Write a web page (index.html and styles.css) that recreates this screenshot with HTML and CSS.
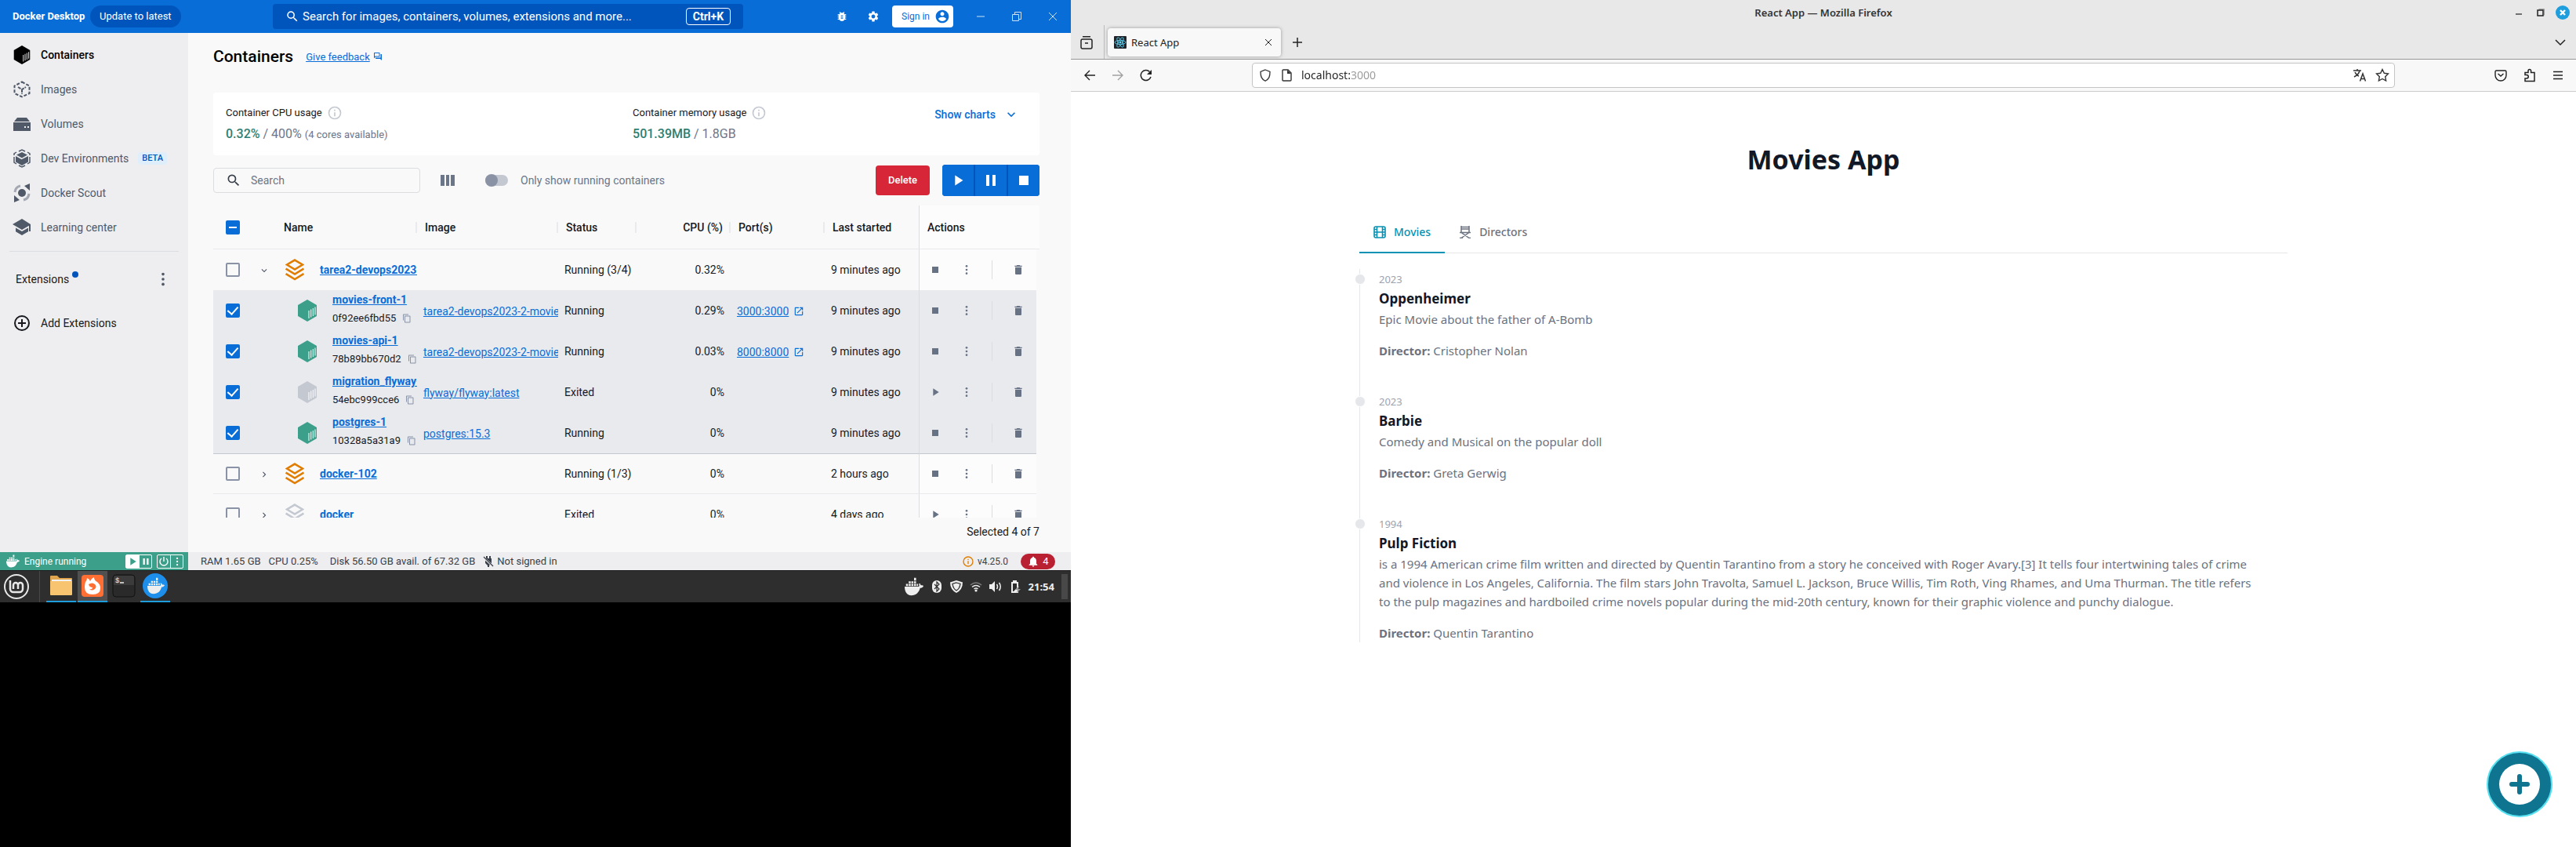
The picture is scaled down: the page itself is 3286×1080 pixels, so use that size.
FILE: index.html
```html
<!DOCTYPE html>
<html lang="en">
<head>
<meta charset="utf-8">
<title>Docker Desktop and React App</title>
<link rel="stylesheet" href="styles.css">
</head>
<body>
<svg class="sprite" aria-hidden="true">
  <symbol id="search" viewBox="0 0 24 24"><path d="M15.5 14h-.79l-.28-.27A6.471 6.471 0 0 0 16 9.5 6.5 6.5 0 1 0 9.5 16c1.61 0 3.09-.59 4.23-1.57l.27.28v.79l5 4.99L20.49 19l-4.99-5zm-6 0C7.01 14 5 11.99 5 9.5S7.01 5 9.5 5 14 7.01 14 9.5 11.99 14 9.5 14z"/></symbol>
  <symbol id="trash" viewBox="0 0 24 24"><path d="M6 19c0 1.1.9 2 2 2h8c1.1 0 2-.9 2-2V7H6v12zM19 4h-3.500l-1-1h-5l-1 1H5v2h14V4z"/></symbol>
  <symbol id="stop" viewBox="0 0 24 24"><path d="M6 6h12v12H6z"/></symbol>
  <symbol id="play" viewBox="0 0 24 24"><path d="M8 5v14l11-7z"/></symbol>
  <symbol id="pause" viewBox="0 0 24 24"><path d="M6 19h4V5H6v14zm8-14v14h4V5h-4z"/></symbol>
  <symbol id="dots" viewBox="0 0 24 24"><circle cx="12" cy="5" r="2"/><circle cx="12" cy="12" r="2"/><circle cx="12" cy="19" r="2"/></symbol>
  <symbol id="copy" viewBox="0 0 24 24"><path d="M16 1H4c-1.100 0-2 .9-2 2v14h2V3h12V1zm3 4H8c-1.100 0-2 .9-2 2v14c0 1.100.9 2 2 2h11c1.100 0 2-.9 2-2V7c0-1.100-.9-2-2-2zm0 16H8V7h11v14z"/></symbol>
  <symbol id="open" viewBox="0 0 24 24"><path d="M19 19H5V5h7V3H5c-1.110 0-2 .9-2 2v14c0 1.100.89 2 2 2h14c1.100 0 2-.9 2-2v-7h-2v7zM14 3v2h3.590l-9.830 9.830 1.410 1.410L19 6.410V10h2V3h-7z"/></symbol>
  <symbol id="info" viewBox="0 0 24 24"><path d="M11 7h2v2h-2zm0 4h2v6h-2zm1-9a10 10 0 1 0 0 20 10 10 0 0 0 0-20zm0 18a8 8 0 1 1 0-16 8 8 0 0 1 0 16z"/></symbol>
  <symbol id="down" viewBox="0 0 24 24"><path d="M7.410 8.590 12 13.170l4.590-4.580L18 10l-6 6-6-6z"/></symbol>
  <symbol id="right" viewBox="0 0 24 24"><path d="M8.590 16.590 13.170 12 8.590 7.410 10 6l6 6-6 6z"/></symbol>
  <symbol id="cube" viewBox="0 0 24 28"><path d="M12 0 24 7v14l-12 7L0 21V7z"/><path d="M14 14v10M16.700 12.500v10M19.400 11v10M22 9.500v10" stroke="#fff" stroke-width="1.200" opacity=".85"/></symbol>
  <symbol id="stack" viewBox="0 0 24 28"><g fill="none" stroke="currentColor" stroke-width="2.600"><path d="M12 1.600 22 7.500l-10 6-10-6z"/><path d="m.6 12.500 11.400 7 11.400-7M.6 19l11.400 7 11.400-7"/></g></symbol>
  <symbol id="whale" viewBox="0 0 28 28"><path d="M0 14h21c1-1 1-3 0-4 1-1 2-1 3 2 1 0 3 0 4 1-1 2-3 3-5 3-2 7-6 11-13 11C3 27 0 21 0 14z"/><path d="M2 10h3v3H2zM6 10h3v3H6zM10 10h3v3h-3zM14 10h3v3h-3zM18 10h2v3h-2zM6 6h3v3H6zM10 6h3v3h-3zM14 6h3v3h-3zM14 1h3v4h-3z"/></symbol>
</svg>

<div class="screens">
<section class="laptop">
  <div class="docker">
    <header class="topbar">
      <strong class="brand">Docker Desktop</strong>
      <button class="update">Update to latest</button>
      <div class="global-search">
        <svg class="i18"><use href="#search"/></svg>
        <input type="text" aria-label="Global search" placeholder="Search for images, containers, volumes, extensions and more...">
        <kbd>Ctrl+K</kbd>
      </div>
      <div class="top-tools">
        <button class="bare" aria-label="Troubleshoot"><svg class="i16" viewBox="0 0 24 24"><path d="M20 8h-2.810c-.45-.78-1.070-1.450-1.820-1.960L17 4.410 15.590 3l-2.170 2.170C12.960 5.060 12.490 5 12 5c-.49 0-.96.06-1.410.17L8.410 3 7 4.410l1.620 1.630C7.880 6.550 7.260 7.220 6.810 8H4v2h2.090c-.05.33-.09.66-.09 1v1H4v2h2v1c0 .34.04.67.09 1H4v2h2.810c1.040 1.790 2.970 3 5.190 3s4.150-1.210 5.190-3H20v-2h-2.090c.05-.33.09-.66.09-1v-1h2v-2h-2v-1c0-.34-.04-.67-.09-1H20V8zm-6 8h-4v-2h4v2zm0-4h-4v-2h4v2z"/></svg></button>
        <button class="bare" aria-label="Settings"><svg class="i16" viewBox="0 0 24 24"><path d="M19.140 12.940c.04-.3.06-.61.06-.94 0-.32-.02-.64-.07-.94l2.030-1.580c.18-.14.23-.41.12-.61l-1.920-3.320c-.12-.22-.37-.29-.59-.22l-2.390.96c-.5-.38-1.030-.7-1.620-.94l-.36-2.540c-.04-.24-.24-.41-.48-.41h-3.840c-.24 0-.43.17-.47.41l-.36 2.540c-.59.24-1.130.57-1.620.94l-2.390-.96c-.22-.08-.47 0-.59.22L2.740 8.870c-.12.21-.08.47.12.61l2.030 1.580c-.05.3-.09.63-.09.94s.02.64.07.94l-2.030 1.580c-.18.14-.23.41-.12.61l1.920 3.320c.12.22.37.29.59.22l2.390-.96c.5.38 1.030.7 1.620.94l.36 2.540c.05.24.24.41.48.41h3.840c.24 0 .44-.17.47-.41l.36-2.540c.59-.24 1.130-.56 1.620-.94l2.390.96c.22.08.47 0 .59-.22l1.920-3.320c.12-.22.07-.47-.12-.61l-2.010-1.580zM12 15.600c-1.980 0-3.600-1.620-3.600-3.600s1.620-3.600 3.600-3.600 3.600 1.620 3.600 3.600-1.620 3.600-3.600 3.600z"/></svg></button>
        <button class="signin">Sign in <svg class="i20" viewBox="0 0 24 24"><path d="M12 2C6.480 2 2 6.480 2 12s4.480 10 10 10 10-4.480 10-10S17.520 2 12 2zm0 3c1.660 0 3 1.340 3 3s-1.340 3-3 3-3-1.340-3-3 1.340-3 3-3zm0 14.200c-2.500 0-4.710-1.280-6-3.220.03-1.990 4-3.080 6-3.080 1.990 0 5.970 1.090 6 3.080-1.290 1.940-3.500 3.220-6 3.220z"/></svg></button>
      </div>
      <div class="win-tools">
        <button class="bare" aria-label="Minimize"><svg class="i14 line" viewBox="0 0 14 14"><path d="M2 7h10"/></svg></button>
        <button class="bare" aria-label="Restore"><svg class="i14 line" viewBox="0 0 14 14"><path d="M1.500 4.500h8v8h-8zM4.500 4V1.500h8v9H10"/></svg></button>
        <button class="bare" aria-label="Close"><svg class="i14 line" viewBox="0 0 14 14"><path d="m2 2 10 10M12 2 2 12"/></svg></button>
      </div>
    </header>

    <div class="docker-body">
      <aside class="sidebar">
        <nav>
          <a href="#containers" class="active"><svg class="i24"><use href="#cube"/></svg>Containers</a>
          <a href="#images"><svg class="i24" viewBox="0 0 24 24" fill="none" stroke="currentColor" stroke-width="2"><path d="M12 2.500 21.500 7.500v9.500L12 21.500 2.500 17V7.500z" stroke-dasharray="4 2"/><path d="m7 9 5 3 5-3M12 12v6" stroke-dasharray="4 1"/></svg>Images</a>
          <a href="#volumes"><svg class="i24" viewBox="0 0 24 24"><path d="M6 4h12l4 5H2zM1 10h22v11H1zm14 5v2h2v-2zm4 0v2h2v-2z" fill-rule="evenodd"/></svg>Volumes</a>
          <a href="#dev"><svg class="i24" viewBox="0 0 24 24"><path d="m12 4 7 3.500-7 4-7-4zM4 9l7.500 4.200L20 9v7.500L12 21l-8-4.500z"/><path d="m8 3 4-2 4 2M2 8V6l3-2M22 8V6l-3-2M2 10v7l3 2M22 10v7l-3 2M8 21l4 2 4-2" fill="none" stroke="currentColor" stroke-width="1.500"/></svg>Dev Environments<span class="beta">BETA</span></a>
          <a href="#scout"><svg class="i24" viewBox="0 0 24 24"><circle cx="12" cy="12" r="5"/><path d="M22 0v9l-7-6zM2 24v-9l7 6z"/><path d="M10 3a9 9 0 0 0-7 8M14 21a9 9 0 0 0 7-8" fill="none" stroke="#a3a8b2" stroke-width="3"/></svg>Docker Scout</a>
          <a href="#learn"><svg class="i24" viewBox="0 0 24 24"><path d="M12 1 0 8l12 7 9-5.200V17h2V8zM4 12.500v4.800L12 22l8-4.700v-4.800L12 17z"/></svg>Learning center</a>
        </nav>
        <hr>
        <div class="ext-head"><span class="ext-title">Extensions</span><button class="bare" aria-label="Extension options"><svg class="i22"><use href="#dots"/></svg></button></div>
        <a class="ext-add" href="#ext"><svg class="i24" viewBox="0 0 24 24"><path d="M13 7h-2v4H7v2h4v4h2v-4h4v-2h-4V7zm-1-5a10 10 0 1 0 0 20 10 10 0 0 0 0-20zm0 18a8 8 0 1 1 0-16 8 8 0 0 1 0 16z"/></svg>Add Extensions</a>
      </aside>

      <main class="content">
        <div class="page-head"><h1>Containers</h1><a href="#feedback">Give feedback</a><svg class="i12 blue" viewBox="0 0 24 24"><path d="M15 4v7H5.170L4 12.170V4h11m1-2H3c-.55 0-1 .45-1 1v14l4-4h10c.55 0 1-.45 1-1V3c0-.55-.45-1-1-1zm5 4h-2v9H6v2c0 .55.45 1 1 1h11l4 4V7c0-.55-.45-1-1-1z"/></svg></div>

        <div class="usage">
          <div class="metric"><div class="label">Container CPU usage<svg class="i20"><use href="#info"/></svg></div><div class="value"><b>0.32%</b> / 400% <small>(4 cores available)</small></div></div>
          <div class="metric"><div class="label">Container memory usage<svg class="i20"><use href="#info"/></svg></div><div class="value"><b>501.39MB</b> / 1.8GB</div></div>
          <button class="charts">Show charts<svg class="i20"><use href="#down"/></svg></button>
        </div>

        <div class="toolbar">
          <label class="filter"><svg class="i20"><use href="#search"/></svg><input type="text" aria-label="Search" placeholder="Search"></label>
          <button class="bare columns" aria-label="Columns"><svg width="18" height="14" viewBox="0 0 18 14"><path d="M0 0h5v14H0zM7 0h4v14H7zM13 0h5v14h-5z"/></svg></button>
          <label class="only"><input class="switch" type="checkbox">Only show running containers</label>
          <button class="delete">Delete</button>
          <div class="group">
            <button aria-label="Start"><svg class="i22"><use href="#play"/></svg></button>
            <button aria-label="Pause"><svg class="i24"><use href="#pause"/></svg></button>
            <button aria-label="Stop"><svg class="i24"><use href="#stop"/></svg></button>
          </div>
        </div>

        <div class="table-scroll">
          <table>
            <colgroup><col class="c-check"><col class="c-exp"><col class="c-name"><col><col class="c-status"><col class="c-num"><col class="c-num"><col class="c-num"><col class="c-act"><col class="c-end"></colgroup>
            <thead><tr>
              <th><input type="checkbox" class="some" aria-label="Select all"></th><th></th>
              <th class="sep">Name</th><th class="sep">Image</th><th class="sep">Status</th><th class="sep num">CPU (%)</th><th class="sep">Port(s)</th><th>Last started</th><th class="act" colspan="2">Actions</th>
            </tr></thead>
            <tbody>
              <tr>
                <td><input type="checkbox" aria-label="Select tarea2-devops2023"></td><td class="exp"><svg class="i14"><use href="#down"/></svg></td>
                <td class="name"><div><svg class="stack on"><use href="#stack"/></svg><a href="#c">tarea2-devops2023-2</a></div></td><td></td><td>Running (3/4)</td><td class="num">0.32%</td><td></td><td>9 minutes ago</td>
                <td class="act"><div><button aria-label="Stop"><svg class="i16"><use href="#stop"/></svg></button><button aria-label="More"><svg class="i16"><use href="#dots"/></svg></button><button class="del" aria-label="Delete"><svg class="i16"><use href="#trash"/></svg></button></div></td>
              </tr>
              <tr class="sel">
                <td><input type="checkbox" checked aria-label="Select movies-front-1"></td><td></td>
                <td class="name sub"><div><svg class="cube on"><use href="#cube"/></svg><p><a href="#c">movies-front-1</a><span>0f92ee6fbd55<svg class="i12"><use href="#copy"/></svg></span></p></div></td><td><a href="#c">tarea2-devops2023-2-movies</a></td><td>Running</td><td class="num">0.29%</td><td><a href="#c">3000:3000</a><svg class="i14 ext"><use href="#open"/></svg></td><td>9 minutes ago</td>
                <td class="act"><div><button aria-label="Stop"><svg class="i16"><use href="#stop"/></svg></button><button aria-label="More"><svg class="i16"><use href="#dots"/></svg></button><button class="del" aria-label="Delete"><svg class="i16"><use href="#trash"/></svg></button></div></td>
              </tr>
              <tr class="sel">
                <td><input type="checkbox" checked aria-label="Select movies-api-1"></td><td></td>
                <td class="name sub"><div><svg class="cube on"><use href="#cube"/></svg><p><a href="#c">movies-api-1</a><span>78b89bb670d2<svg class="i12"><use href="#copy"/></svg></span></p></div></td><td><a href="#c">tarea2-devops2023-2-movies</a></td><td>Running</td><td class="num">0.03%</td><td><a href="#c">8000:8000</a><svg class="i14 ext"><use href="#open"/></svg></td><td>9 minutes ago</td>
                <td class="act"><div><button aria-label="Stop"><svg class="i16"><use href="#stop"/></svg></button><button aria-label="More"><svg class="i16"><use href="#dots"/></svg></button><button class="del" aria-label="Delete"><svg class="i16"><use href="#trash"/></svg></button></div></td>
              </tr>
              <tr class="sel">
                <td><input type="checkbox" checked aria-label="Select migration_flyway"></td><td></td>
                <td class="name sub"><div><svg class="cube"><use href="#cube"/></svg><p><a href="#c">migration_flyway-1</a><span>54ebc999cce6<svg class="i12"><use href="#copy"/></svg></span></p></div></td><td><a href="#c">flyway/flyway:latest</a></td><td>Exited</td><td class="num">0%</td><td></td><td>9 minutes ago</td>
                <td class="act"><div><button aria-label="Start"><svg class="i16"><use href="#play"/></svg></button><button aria-label="More"><svg class="i16"><use href="#dots"/></svg></button><button class="del" aria-label="Delete"><svg class="i16"><use href="#trash"/></svg></button></div></td>
              </tr>
              <tr class="sel">
                <td><input type="checkbox" checked aria-label="Select postgres-1"></td><td></td>
                <td class="name sub"><div><svg class="cube on"><use href="#cube"/></svg><p><a href="#c">postgres-1</a><span>10328a5a31a9<svg class="i12"><use href="#copy"/></svg></span></p></div></td><td><a href="#c">postgres:15.3</a></td><td>Running</td><td class="num">0%</td><td></td><td>9 minutes ago</td>
                <td class="act"><div><button aria-label="Stop"><svg class="i16"><use href="#stop"/></svg></button><button aria-label="More"><svg class="i16"><use href="#dots"/></svg></button><button class="del" aria-label="Delete"><svg class="i16"><use href="#trash"/></svg></button></div></td>
              </tr>
              <tr class="after">
                <td><input type="checkbox" aria-label="Select docker-102"></td><td class="exp"><svg class="i14"><use href="#right"/></svg></td>
                <td class="name"><div><svg class="stack on"><use href="#stack"/></svg><a href="#c">docker-102</a></div></td><td></td><td>Running (1/3)</td><td class="num">0%</td><td></td><td>2 hours ago</td>
                <td class="act"><div><button aria-label="Stop"><svg class="i16"><use href="#stop"/></svg></button><button aria-label="More"><svg class="i16"><use href="#dots"/></svg></button><button class="del" aria-label="Delete"><svg class="i16"><use href="#trash"/></svg></button></div></td>
              </tr>
              <tr>
                <td><input type="checkbox" aria-label="Select docker"></td><td class="exp"><svg class="i14"><use href="#right"/></svg></td>
                <td class="name"><div><svg class="stack"><use href="#stack"/></svg><a href="#c">docker</a></div></td><td></td><td>Exited</td><td class="num">0%</td><td></td><td>4 days ago</td>
                <td class="act"><div><button aria-label="Start"><svg class="i16"><use href="#play"/></svg></button><button aria-label="More"><svg class="i16"><use href="#dots"/></svg></button><button class="del" aria-label="Delete"><svg class="i16"><use href="#trash"/></svg></button></div></td>
              </tr>
            </tbody>
          </table>
        </div>
        <p class="selected">Selected 4 of 7</p>
      </main>
    </div>

    <footer class="status">
      <div class="engine">
        <svg class="i17"><use href="#whale"/></svg><span>Engine running</span>
        <div class="pair"><button class="lit" aria-label="Resume"><svg class="i16"><use href="#play"/></svg></button><button aria-label="Pause"><svg class="i14"><use href="#pause"/></svg></button></div>
        <div class="pair"><button aria-label="Power"><svg class="i14" viewBox="0 0 14 14" fill="none" stroke="currentColor" stroke-width="1.400"><path d="M7 1v6M4 3a5 5 0 1 0 6 0"/></svg></button><button aria-label="More"><svg class="i14"><use href="#dots"/></svg></button></div>
      </div>
      <div class="stats">
        <span class="ram">RAM 1.65 GB</span><span class="cpu">CPU 0.25%</span><span class="disk">Disk 56.50 GB avail. of 67.32 GB</span>
        <svg class="i14" viewBox="0 0 14 14"><path d="M4 0h2v3h2V0h2v3h1v6l-3 3v2H6v-2L3 9V3h1z"/><path d="m1 2 12 11" stroke="#eeeef0" stroke-width="2.500"/><path d="m1 1 12 12" stroke="currentColor" stroke-width="1.200"/></svg><span>Not signed in</span>
        <span class="version"><svg class="i16"><use href="#info"/></svg>v4.25.0</span>
        <button class="bell"><svg class="i16" viewBox="0 0 24 24"><path d="M12 22c1.100 0 2-.9 2-2h-4c0 1.100.89 2 2 2zm6-6v-5c0-3.070-1.640-5.640-4.500-6.320V4c0-.83-.67-1.500-1.500-1.500s-1.500.67-1.500 1.500v.68C7.630 5.360 6 7.920 6 11v5l-2 2v1h16v-1l-2-2z"/></svg>4</button>
      </div>
    </footer>
  </div>

  <div class="taskbar">
    <button class="menu" aria-label="Menu"><svg class="i32" viewBox="0 0 32 32" fill="none" stroke="#e8e8e8" stroke-width="2"><circle cx="16" cy="16" r="15"/><path d="M8 8v11a4 4 0 0 0 4 4h8a4 4 0 0 0 4-4v-5a3 3 0 0 0-6 0v5-5a3 3 0 0 0-6 0v5" stroke-width="2.500"/></svg></button>
    <button class="app run" aria-label="Files"><svg class="i32" viewBox="0 0 32 32"><path d="M2 4q0-1 1-1h8l3 3h15q1 0 1 1v6H2z" fill="#e0a54f"/><path d="M4 8h25v4H4z" fill="#f2f2f2"/><path d="M2 10h28v17q0 1-1 1H3q-1 0-1-1z" fill="#f8c470"/></svg></button>
    <button class="app run open" aria-label="Firefox"><svg class="i32" viewBox="0 0 32 32"><rect x="2" y="2" width="28" height="28" rx="4" fill="#ff6f33"/><path d="M7 11q2-2 2-5 3 1 4 4 2-4 5-5 0 4 4 6 4 3 4 8 0 8-10 8T6 18q0-4 1-7z" fill="#fff"/><path d="M11 14q5-3 8 0 3 3 0 6-4 3-7 0 4 1 4-2-4 0-5-4z" fill="#ff6f33"/></svg></button>
    <button class="app" aria-label="Terminal"><svg class="i32" viewBox="0 0 32 32"><rect x="2" y="2" width="28" height="28" rx="4" fill="#2a2a2a" stroke="#111"/><path d="M3 5q0-2 2-2h22q2 0 2 2v10H3z" fill="#3b3b3b"/><path d="M11 12h5" stroke="#eee" stroke-width="1.500"/><text x="5" y="12" font-family="Liberation Mono,monospace" font-size="9" fill="#eee">$</text></svg></button>
    <button class="app run" aria-label="Docker Desktop"><svg class="i32" viewBox="0 0 32 32"><circle cx="16" cy="16" r="16" fill="#1d8feb"/><svg x="5" y="5" width="24" height="22" fill="#fff"><use href="#whale"/></svg></svg></button>
    <div class="tray">
      <svg class="i24"><use href="#whale"/></svg>
      <svg class="i16" viewBox="0 0 16 16"><rect x="2" width="12" height="16" rx="6"/><path d="m5 5 6 6-3 3V2l3 3-6 6" fill="none" stroke="#2e2e2e" stroke-width="1.200"/></svg>
      <svg class="i16" viewBox="0 0 16 16"><path d="m8 0 8 2.500Q16 12 8 16 0 12 0 2.500z"/><path d="m8 3 5 1.500Q12 11 8 13 4 11 3 4.500z" fill="none" stroke="#2e2e2e" stroke-width="1.300"/></svg>
      <svg class="i16" viewBox="0 0 16 16" fill="none" stroke="currentColor" stroke-width="1.600"><path d="M1 6q7-6 14 0" opacity=".4"/><path d="M3 8.500q5-4 10 0M5.500 11q2.500-2 5 0"/><circle cx="8" cy="13" r=".8"/></svg>
      <svg class="i16" viewBox="0 0 16 16"><path d="M0 5h3l4-4v14l-4-4H0z"/><path d="M9.500 5q2 3 0 6M12.500 3q3.500 5 0 10" fill="none" stroke="currentColor" stroke-width="1.500"/></svg>
      <svg class="i16" viewBox="0 0 16 16"><path d="M3 2h2V0h5v2h2v14H3z"/><path d="M5 4h5v6l-4 4H5z" fill="#2e2e2e"/><path d="m13 7-5 5h3l-1 4 5-5h-3z" fill="#999"/></svg>
      <time>21:54</time><i class="peek"></i>
    </div>
  </div>
</section>

<section class="firefox">
  <div class="titlebar"><span>React App — Mozilla Firefox</span>
    <div class="ff-win">
      <button aria-label="Minimize"><svg class="i18" viewBox="0 0 18 18"><path d="M5 11h8" stroke="#222" stroke-width="1.200"/></svg></button>
      <button aria-label="Restore"><svg class="i18" viewBox="0 0 18 18" fill="none"><path d="M6.500 4.500h7v8" stroke="#999"/><path d="M5 6h7v7H5z" stroke="#222" stroke-width="1.500"/></svg></button>
      <button aria-label="Close"><svg class="i18" viewBox="0 0 18 18"><circle cx="9" cy="9" r="9" fill="#1f9ede"/><path d="m6 6 6 6M12 6l-6 6" stroke="#fff" stroke-width="2.400"/></svg></button>
    </div>
  </div>
  <div class="tabstrip">
    <button class="ffview" aria-label="Firefox View"><svg class="i18" viewBox="0 0 18 18" fill="none" stroke="currentColor" stroke-width="1.500"><rect x="2" y="5" width="14" height="12" rx="2"/><path d="M4 1.800h10M7 10h4"/></svg></button>
    <div class="tab"><svg class="i16" viewBox="0 0 16 16"><rect width="16" height="16" rx="1" fill="#20232a"/><g fill="none" stroke="#61dafb" stroke-width=".8"><ellipse cx="8" cy="8" rx="7" ry="2.600"/><ellipse cx="8" cy="8" rx="7" ry="2.600" transform="rotate(60 8 8)"/><ellipse cx="8" cy="8" rx="7" ry="2.600" transform="rotate(120 8 8)"/></g><circle cx="8" cy="8" r="1.400" fill="#61dafb"/></svg><span>React App</span><button aria-label="Close tab"><svg class="i12" viewBox="0 0 12 12"><path d="m2 2 8 8M10 2l-8 8" stroke="currentColor"/></svg></button></div>
    <button class="newtab" aria-label="New tab"><svg class="i14" viewBox="0 0 14 14"><path d="M7 1v12M1 7h12" stroke="currentColor" stroke-width="1.500"/></svg></button>
    <button class="alltabs" aria-label="List tabs"><svg class="i14" viewBox="0 0 14 14"><path d="m1 4 6 6 6-6" fill="none" stroke="currentColor" stroke-width="1.500"/></svg></button>
  </div>
  <div class="navbar">
    <div class="nav-left">
      <button aria-label="Back"><svg class="i16" viewBox="0 0 16 16"><path d="M15 8H2m6-6L2 8l6 6" fill="none" stroke="currentColor" stroke-width="1.400"/></svg></button>
      <button class="dim" aria-label="Forward"><svg class="i16" viewBox="0 0 16 16"><path d="M1 8h13M8 2l6 6-6 6" fill="none" stroke="currentColor" stroke-width="1.400"/></svg></button>
      <button aria-label="Reload"><svg class="i16" viewBox="0 0 16 16"><path d="M14 10a6.500 6.500 0 1 1-1.500-6.500" fill="none" stroke="currentColor" stroke-width="1.500"/><path d="M15 1v6H9z"/></svg></button>
    </div>
    <div class="url">
      <svg class="i16" viewBox="0 0 16 16"><path d="m8 1 6 2.500c0 6-1 9-6 11.800C3 12.500 2 9.500 2 3.500z" fill="none" stroke="currentColor" stroke-width="1.300"/></svg>
      <svg class="i16" viewBox="0 0 16 16"><path d="M3 2q0-1 1-1h6l4 4v9q0 1-1 1H4q-1 0-1-1z" fill="none" stroke="currentColor" stroke-width="1.400"/><path d="M9 1v5h5z"/></svg>
      <input type="text" aria-label="Address" value="localhost:3000">
      <svg class="i18" viewBox="0 0 18 18" fill="none" stroke="currentColor" stroke-width="1.500"><path d="M1 3h10M6 1v2M9 3q-1 5-7 8M3 5q2 4 5 5M9.500 16.500 13 7l3.500 9.500M11 13.500h4.500"/></svg>
      <svg class="i18" viewBox="0 0 18 18"><path d="m9 1.500 2.300 4.800 5.200.7-3.800 3.700.9 5.300L9 13.500 4.400 16l.9-5.300L1.500 7l5.200-.7z" fill="none" stroke="currentColor" stroke-width="1.400"/></svg>
    </div>
    <div class="nav-right">
      <button aria-label="Pocket"><svg class="i16" viewBox="0 0 16 16" fill="none" stroke="currentColor" stroke-width="1.400"><path d="M2.500 2h11Q15 2 15 3.500V8a7 7 0 0 1-14 0V3.500Q1 2 2.500 2z"/><path d="m4.500 6 3.500 3 3.500-3"/></svg></button>
      <button aria-label="Extensions"><svg class="i18" viewBox="0 0 18 18"><path d="M3 8V5.500h4V3.300a1.800 1.800 0 0 1 3.600 0v2.200H15V16.500H3V13h2a1.500 1.500 0 0 0 0-4.500H3z" fill="none" stroke="currentColor" stroke-width="1.500"/></svg></button>
      <button aria-label="Menu"><svg class="i14" viewBox="0 0 14 14"><path d="M1 2.500h12M1 7h12M1 11.500h12" stroke="currentColor" stroke-width="1.400"/></svg></button>
    </div>
  </div>

  <div class="page">
    <div class="wrap">
      <h1>Movies App</h1>
      <div class="tabs" role="tablist">
        <button role="tab" aria-selected="true" class="on"><svg class="i16" viewBox="0 0 16 16" fill="none" stroke="currentColor" stroke-width="1.600"><rect x="1" y="1" width="14" height="14" rx="2"/><path d="M4.500 1v14M11.500 1v14M4.500 8h7M1 4.500h3.500M1 8h3.500M1 11.500h3.500M11.500 4.500H15M11.500 8H15M11.500 11.500H15"/></svg>Movies</button>
        <button role="tab" aria-selected="false"><svg class="i16" viewBox="0 0 16 16" fill="none" stroke="currentColor" stroke-width="1.500"><path d="M3 0v9M13 0v9M3 1.500h10M3 4h10M1 8.500h14M3 15.500l10-7M13 15.500l-10-7M1 15.500h4M11 15.500h4"/></svg>Directors</button>
      </div>
      <ol class="timeline">
        <li><time>2023</time><h3>Oppenheimer</h3><p>Epic Movie about the father of A-Bomb</p><p class="by"><b>Director:</b> Cristopher Nolan</p></li>
        <li><time>2023</time><h3>Barbie</h3><p>Comedy and Musical on the popular doll</p><p class="by"><b>Director:</b> Greta Gerwig</p></li>
        <li><time>1994</time><h3>Pulp Fiction</h3><p>is a 1994 American crime film written and directed by Quentin Tarantino from a story he conceived with Roger Avary.[3] It tells four intertwining tales of crime and violence in Los Angeles, California. The film stars John Travolta, Samuel L. Jackson, Bruce Willis, Tim Roth, Ving Rhames, and Uma Thurman. The title refers to the pulp magazines and hardboiled crime novels popular during the mid-20th century, known for their graphic violence and punchy dialogue.</p><p class="by"><b>Director:</b> Quentin Tarantino</p></li>
      </ol>
    </div>
    <button class="fab" aria-label="Add movie"><svg width="52" height="52" viewBox="0 0 52 52"><circle cx="26" cy="26" r="26" fill="#fff"/><path d="M26 16v20M16 26h20" stroke="#0e7490" stroke-width="6" stroke-linecap="round"/></svg></button>
  </div>
</section>
</div>
</body>
</html>
```
FILE: styles.css
```css
* { box-sizing: border-box; }
body { margin: 0; background: #000; font-family: Roboto, sans-serif; font-size: 14px; line-height: 20px; color: #17191e; }
h1, h3, p, ol { margin: 0; padding: 0; }
button, input { font: inherit; color: inherit; margin: 0; padding: 0; }
button { border: 0; background: none; display: flex; align-items: center; justify-content: center; }
a { color: #086dd7; }
svg { display: block; flex: none; fill: currentColor; }
svg[fill="none"] { fill: none; }
.sprite { position: absolute; width: 0; height: 0; }
.i12 { width: 12px; height: 12px; }
.i14 { width: 14px; height: 14px; }
.i16 { width: 16px; height: 16px; }
.i17 { width: 17px; height: 17px; }
.i18 { width: 18px; height: 18px; }
.i20 { width: 20px; height: 20px; }
.i22 { width: 22px; height: 22px; }
.i24 { width: 24px; height: 24px; }
.i32 { width: 32px; height: 32px; }
.blue { color: #086dd7; }

.screens { display: grid; grid-template-columns: 1366fr 1920fr; min-height: 100vh; }
.laptop { min-width: 0; }

/* Docker top bar */
.topbar { display: flex; align-items: center; height: 42px; padding: 0 16px; background: #086dd7; color: #fff; }
.brand { font-size: 13px; font-weight: 700; width: 99px; white-space: nowrap; }
.update { height: 28px; padding: 0 12px; border-radius: 14px; background: #0055bc; font-size: 13px; white-space: nowrap; }
.global-search { display: flex; align-items: center; width: 600px; height: 32px; margin-left: auto; padding: 0 16px; border-radius: 4px; background: #0055bc; }
.global-search input { flex: 1; min-width: 0; margin-left: 4px; border: 0; background: none; font-size: 15px; }
.global-search input::placeholder { color: #fff; opacity: 1; }
kbd { height: 22px; padding: 0 8px; border: 1px solid #fff; border-radius: 4px; font: 700 14px/20px Roboto, sans-serif; }
.top-tools { display: flex; align-items: center; gap: 24px; margin-left: 118px; }
.signin { gap: 6px; height: 28px; margin-left: -8px; padding: 0 4px 0 12px; border-radius: 4px; background: #fff; color: #086dd7; font-size: 12px; white-space: nowrap; }
.win-tools { display: flex; gap: 32px; margin-left: 28px; }
.line { fill: none; stroke: #fff; opacity: .8; }

/* Sidebar */
.docker-body { display: flex; }
.sidebar { width: 240px; flex: none; padding: 6px 0 0; background: #eeeef0; color: #505968; }
.sidebar a { display: flex; align-items: center; gap: 12px; height: 44px; padding-left: 16px; color: inherit; text-decoration: none; }
.sidebar a.active { color: #000; font-weight: 500; }
.sidebar hr { height: 1px; margin: 8px 12px 13px; border: 0; background: #dcdde1; }
.beta { padding: 0 5px; border-radius: 4px; background: #dfeefb; color: #0055bc; font-size: 11px; font-weight: 500; line-height: 16px; }
.ext-head { display: flex; align-items: center; justify-content: space-between; height: 44px; padding: 0 21px 0 20px; }
.ext-title { display: flex; color: #17191e; }
.ext-title::after { content: ""; width: 8px; height: 8px; margin-left: 4px; border-radius: 50%; background: #0055bc; }
.sidebar .ext-add { margin-top: 12px; color: #17191e; }

/* Containers view */
.content { flex: 1; min-width: 0; padding: 0 40px 16px 32px; background: #f9f9fa; }
.page-head { display: flex; align-items: center; height: 60px; }
.page-head h1 { font-size: 21px; font-weight: 500; color: #000; margin-right: 16px; }
.page-head a { font-size: 13px; margin: 2px 4px 0 0; }
.usage { display: grid; grid-template-columns: 519fr 385fr auto; align-items: start; min-height: 80px; margin-top: 16px; padding: 16px 26px 12px 16px; border-radius: 4px; background: #fff; }
.label { display: flex; align-items: center; gap: 6px; font-size: 13px; line-height: 20px; }
.label svg { color: #c4c8d1; }
.value { margin-top: 4px; font-size: 16px; line-height: 26px; color: #6c7689; }
.value b { font-weight: 500; color: #2e7f74; }
.value small { font-size: 13px; }
.charts { gap: 10px; height: 24px; color: #086dd7; font-weight: 500; }
.toolbar { display: flex; align-items: center; height: 40px; margin: 12px 0; }
.filter { display: flex; align-items: center; width: 264px; height: 32px; padding: 0 15px; border: 1px solid #dcdde1; border-radius: 4px; color: #393f49; }
.filter input { flex: 1; min-width: 0; margin-left: 12px; border: 0; background: none; }
.filter input::placeholder { color: #6c7689; opacity: 1; }
.columns { margin: 0 39px 0 26px; color: #6c7689; }
.only { display: flex; align-items: center; gap: 16px; color: #6c7689; white-space: nowrap; }
.switch { appearance: none; display: flex; align-items: center; width: 29px; height: 14px; border-radius: 7px; background: #c4c8d1; }
.switch::before { content: ""; width: 16px; height: 16px; flex: none; border-radius: 50%; background: #8993a5; }
.delete { height: 38px; margin-left: auto; padding: 0 16px; border-radius: 4px; background: #d72638; color: #fff; font-size: 13px; font-weight: 500; }
.group { display: flex; gap: 2px; margin-left: 16px; border-radius: 4px; overflow: hidden; background: #0055bc; color: #fff; }
.group button { width: 40px; height: 40px; background: #086dd7; }

/* Table */
.table-scroll { height: 398px; overflow: hidden; }
table { width: 100%; table-layout: fixed; border-spacing: 0; border-collapse: separate; }
.c-check, .c-exp { width: 40px; }
.c-name { width: 180px; }
.c-status { width: 100px; }
.c-num { width: 120px; }
.c-act { width: 150px; }
.c-end { width: 4px; }
th { height: 56px; padding: 0 10px; border-bottom: 1px solid #e9eaee; font-weight: 500; text-align: left; }
th.sep { background: linear-gradient(#e9eaee, #e9eaee) right center / 2px 14px no-repeat; }
th:first-child, td:first-child { padding: 0 0 0 16px; }
td { height: 52px; padding: 0 8px; overflow: hidden; white-space: nowrap; }
td:nth-child(4) { text-overflow: clip; }
.num { text-align: right; }
th.act, td.act { border-left: 1px solid #dcdde1; background: #fcfcfd; }
.sel td, .sel td.act { background: #e9eaee; }
.after td { border-top: 1px solid #c4c8d1; border-bottom: 1px solid #e9eaee; }
td > a, td > svg { display: inline-block; vertical-align: middle; }
input[type="checkbox"]:not(.switch) { appearance: none; display: flex; align-items: center; justify-content: center; width: 18px; height: 18px; border: 2px solid #8993a5; border-radius: 2px; }
input[type="checkbox"]:checked:not(.switch), input[type="checkbox"].some:not(.switch) { border-color: #086dd7; background: #086dd7; }
input[type="checkbox"]:checked::before { content: ""; width: 6px; height: 11px; margin-bottom: 3px; border: solid #fff; border-width: 0 2px 2px 0; transform: rotate(42deg); }
input[type="checkbox"].some::before { content: ""; width: 10px; height: 2px; background: #fff; }
.exp svg { margin-left: 10px; color: #505968; }
td.name { padding: 0 0 0 12px; }
.name div { display: flex; align-items: center; gap: 20px; overflow: hidden; }
.name a { font-weight: 700; }
td.sub { padding-left: 28px; vertical-align: top; }
.sub p { line-height: 24px; margin-bottom: 4px; }
.sub p a { display: block; }
.sub span { display: flex; align-items: center; gap: 8px; font-size: 13px; }
.sub span svg { color: #8993a5; }
.stack, .cube { width: 24px; height: 28px; color: #c4c8d1; }
.stack.on { color: #e07c00; }
.cube.on { color: #3b9f8a; }
.ext { margin-left: 6px; color: #086dd7; }
td.act { padding: 0; }
.act div { display: flex; align-items: center; color: #677285; }
.act button { width: 40px; height: 24px; }
.act button.del { justify-content: flex-end; width: 52px; margin-left: 12px; padding-right: 10px; border-left: 1px solid #dcdde1; }
.selected { padding-top: 8px; text-align: right; }

/* Status bar */
.status { display: flex; height: 23px; background: #eeeef0; color: #393f49; }
.engine { display: flex; align-items: center; width: 240px; flex: none; padding: 0 6px 0 8px; gap: 6px; background: #3b9f8a; color: #fff; font-size: 12px; }
.engine span { flex: 1; }
.pair { display: flex; border: 1px solid #fff; border-radius: 2px; }
.pair button { width: 16px; height: 16px; }
.pair button + button { border-left: 1px solid #fff; }
.pair .lit { background: #fff; color: #3b9f8a; }
.stats { display: flex; align-items: center; flex: 1; padding: 0 20px 0 16px; font-size: 13px; white-space: nowrap; }
.cpu { margin: 0 15px 0 10px; }
.disk { margin-right: 10px; }
.stats svg + span { margin-left: 4px; }
.stats .version { display: flex; align-items: center; gap: 4px; margin-left: auto; font-size: 12px; }
.version svg { color: #e07c00; }
.bell { gap: 4px; width: 44px; height: 20px; margin-left: 16px; border-radius: 10px; background: #b92032; color: #fff; }

/* Desktop panel */
.taskbar { display: flex; align-items: center; height: 41px; padding-left: 5px; background: #2e2e2e; border-top: 1px solid #1c1c1c; color: #eee; }
.menu { width: 46px; height: 40px; padding-right: 14px; margin-right: 8px; border-right: 1px solid #484848; }
.app { width: 38px; height: 40px; margin-right: 2px; border-bottom: 2px solid transparent; }
.run { border-color: #1f9ede; }
.open { background: #505050; }
.tray { display: flex; align-items: center; gap: 9px; margin-left: auto; padding-right: 4px; }
.tray time { font: 700 13px "Noto Sans", sans-serif; }
.peek { width: 8px; height: 32px; background: #484848; }

/* Firefox chrome */
.firefox { display: flex; flex-direction: column; min-width: 0; background: #fff; font-family: "Noto Sans", "Open Sans", sans-serif; }
.titlebar { display: grid; grid-template-columns: 1fr auto 1fr; align-items: center; height: 32px; padding: 0 8px; background: #e8e8e8; color: #333; font-size: 13px; font-weight: 600; }
.titlebar span { grid-column: 2; }
.ff-win { display: flex; justify-content: flex-end; gap: 10px; }
.tabstrip { display: flex; align-items: center; height: 44px; background: #e8e8e8; border-bottom: 1px solid #999; color: #222; }
.ffview { width: 43px; height: 43px; padding-right: 3px; border-right: 1px solid #bbb; }
.tab { display: flex; align-items: center; gap: 6px; width: 221px; height: 36px; margin-left: 4px; padding: 0 10px 0 8px; border-radius: 4px; background: #f8f8f8; box-shadow: 0 0 4px #999; }
.tab span { flex: 1; font-size: 13px; }
.newtab { margin-left: 14px; }
.alltabs { margin: 0 13px 0 auto; }
.navbar { display: flex; align-items: center; height: 41px; padding: 0 16px; background: #f8f8f8; border-bottom: 1px solid #ccc; color: #222; }
.nav-left { display: flex; gap: 20px; width: 215px; }
.dim { opacity: .4; }
.url { display: flex; align-items: center; gap: 11px; flex: 1; min-width: 0; height: 32px; padding: 0 6px 0 8px; border: 1px solid #c4c4c4; border-radius: 4px; background: #fff; color: #333; }
.url input { flex: 1; min-width: 0; border: 0; font-size: 14px; color: transparent; background: linear-gradient(90deg, #222 62px, #999 62px); background-clip: text; }
.nav-right { display: flex; gap: 20px; width: 215px; justify-content: flex-end; }

/* Movies page */
.page { position: relative; flex: 1; color: #6b7280; font-size: 15px; line-height: 24px; }
.wrap { max-width: 1184px; margin: 0 auto; }
.page h1 { padding-top: 66px; text-align: center; color: #111827; font-size: 34px; font-weight: 700; line-height: 40px; }
.tabs { display: flex; margin-top: 46px; border-bottom: 1px solid #e5e7eb; }
.tabs button { gap: 10px; height: 54px; margin-bottom: -1px; padding: 2px 18px 0; border-bottom: 2px solid transparent; color: #6b7280; font-size: 14px; font-weight: 500; }
.tabs .on { border-color: #0891b2; color: #0891b2; }
.timeline { margin-top: 20px; border-left: 1px solid #e5e7eb; list-style: none; }
.timeline li { position: relative; padding: 6px 38px 40px 24px; }
.timeline li:last-child { padding-bottom: 0; }
.timeline li::before { content: ""; position: absolute; left: -7px; top: 6px; width: 12px; height: 12px; border: 1px solid #fff; border-radius: 50%; background: #e5e7eb; }
.timeline time { display: block; font-size: 13px; line-height: 14px; color: #9ca3af; }
.timeline h3 { margin-top: 4px; color: #111827; font-size: 17px; font-weight: 700; line-height: 28px; }
.by { margin-top: 16px; }
.fab { position: absolute; right: 30px; bottom: 38px; width: 84px; height: 84px; border: 2px solid #56e0f0; border-radius: 50%; background: #0e7490; }
```
